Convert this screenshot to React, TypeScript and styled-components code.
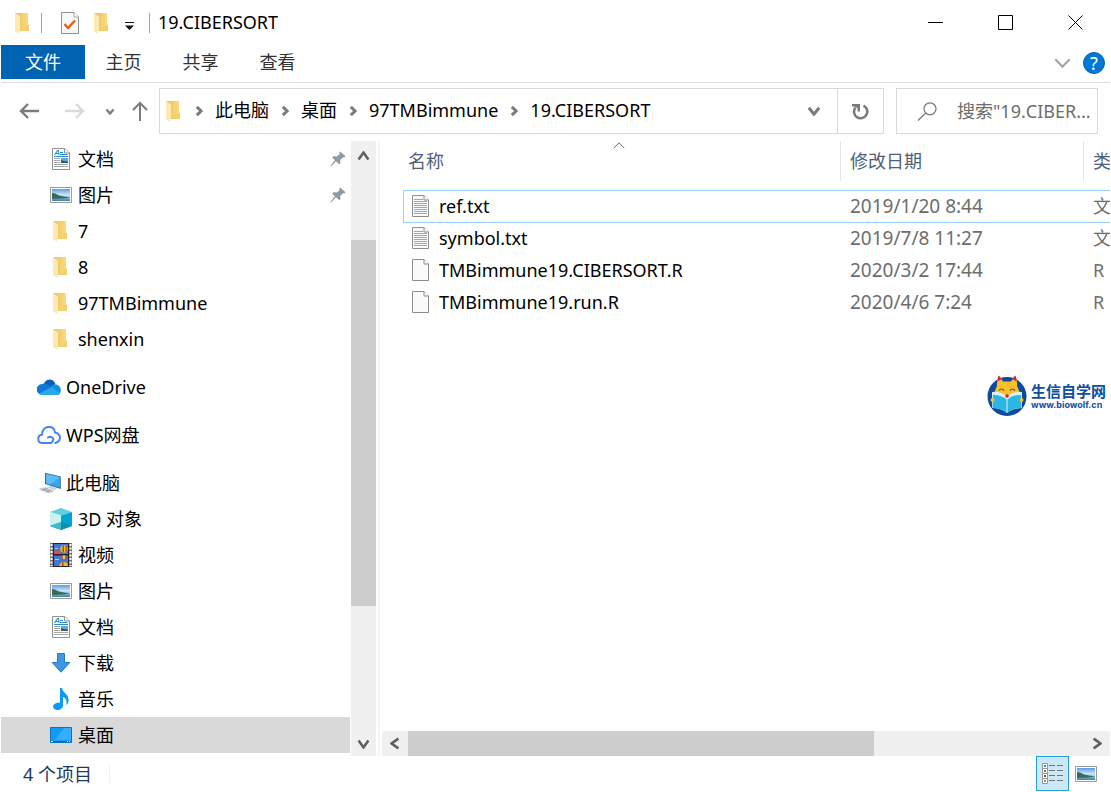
import React from 'react';
import styled, { createGlobalStyle } from 'styled-components';

const GlobalStyle = createGlobalStyle`
  * { box-sizing: border-box; }
  body {
    margin: 0;
    background: #fff;
    color: #000;
    font: 18px/24px "Noto Sans", "Noto Sans CJK SC", sans-serif;
  }
  button, input { font: inherit; color: inherit; }
  svg { display: block; flex: none; }
`;

const Window = styled.div`
  display: flex;
  flex-direction: column;
  min-height: 100vh;
  padding: 0 1px;
  overflow: hidden;
`;

const PlainButton = styled.button`
  display: flex;
  flex: none;
  align-items: center;
  justify-content: center;
  padding: 0;
  border: 0;
  background: none;
`;

/* Title bar */
const TitleBar = styled.header`
  display: flex;
  align-items: center;
  height: 45px;
  padding-left: 14px;
`;
const TitleDivider = styled.span`
  width: 1px;
  height: 20px;
  background: #a3a3a3;
`;
const DocTools = styled.div`
  display: flex;
  align-items: center;
  gap: 19px;
  margin-left: 10px;
`;
const FolderTools = styled.div`
  display: flex;
  align-items: center;
  gap: 15px;
  margin-left: 15px;
`;
const Title = styled.h1`
  flex: 1;
  margin: 0;
  padding: 0 0 2px 8px;
  font-size: 18px;
  font-weight: 400;
`;
const CaptionButton = styled(PlainButton)`
  width: 70px;
  height: 45px;
`;

/* Ribbon */
const Ribbon = styled.nav`
  display: flex;
  align-items: flex-start;
  height: 38px;
  border-bottom: 1px solid #dadbdc;
`;
const RibbonTab = styled(PlainButton)<{ $primary?: boolean }>`
  width: ${(p) => (p.$primary ? 84 : 77)}px;
  height: 34px;
  color: ${(p) => (p.$primary ? '#fff' : '#333')};
  background: ${(p) => (p.$primary ? '#0063b1' : 'none')};
`;
const RibbonEnd = styled.div`
  display: flex;
  align-items: center;
  gap: 12px;
  height: 36px;
  margin-left: auto;
  padding-right: 5px;
`;
const HelpButton = styled(PlainButton)`
  width: 22px;
  height: 22px;
  border: 1px solid #0a5fae;
  border-radius: 50%;
  background: #0078d7;
  color: #fff;
  font-size: 18px;
  line-height: 20px;
`;

/* Address row */
const AddressRow = styled.div`
  display: flex;
  height: 58px;
  padding: 5px 12px 7px 18px;
`;
const History = styled.div`
  display: flex;
  align-items: center;
  width: 140px;
`;
const HistoryButton = styled(PlainButton)<{ $gap: number }>`
  margin-right: ${(p) => p.$gap}px;
`;
const AddressBox = styled.div`
  display: flex;
  flex: 1;
  align-items: center;
  padding-left: 6px;
  border: 1px solid #d9d9d9;
`;
const Crumbs = styled.ol`
  display: flex;
  flex: 1;
  margin: 0;
  padding: 0 0 0 13px;
  list-style: none;
`;
const Crumb = styled.li`
  display: flex;
  align-items: center;
  gap: 12px;
  padding-right: 12px;
  a {
    padding-bottom: 2px;
    color: #000;
    text-decoration: none;
  }
`;
const AddressButton = styled(PlainButton)<{ $divided?: boolean }>`
  width: 46px;
  height: 44px;
  border-left: ${(p) => (p.$divided ? '1px solid #d9d9d9' : '0')};
`;
const SearchBox = styled.label`
  display: flex;
  flex: none;
  align-items: center;
  gap: 20px;
  width: 202px;
  margin-left: 12px;
  padding-left: 20px;
  border: 1px solid #d9d9d9;
`;
const SearchInput = styled.input`
  flex: 1;
  min-width: 0;
  padding: 0;
  border: 0;
  outline: 0;
  background: none;
  &::placeholder { color: #6d6d6d; opacity: 1; }
`;

/* Body */
const Body = styled.div`
  display: flex;
  flex: 1;
`;
const Sidebar = styled.nav`
  flex: none;
  width: 349px;
`;
const SideItem = styled.a<{ $top?: boolean; $selected?: boolean }>`
  display: flex;
  align-items: center;
  gap: 5px;
  height: 36px;
  margin-top: ${(p) => (p.$top ? 12 : 0)}px;
  padding: 0 4px 0 ${(p) => (p.$top ? 36 : 48)}px;
  background: ${(p) => (p.$selected ? '#d9d9d9' : 'none')};
  color: #000;
  text-decoration: none;
`;
const SideIcon = styled.span`
  display: flex;
  flex: none;
  justify-content: center;
  width: 24px;
`;
const SideLabel = styled.span`
  flex: 1;
`;
const VerticalBar = styled.div`
  display: flex;
  flex: none;
  flex-direction: column;
  width: 25px;
  margin-left: 1px;
  background: #f0f0f0;
`;
const BarButton = styled(PlainButton)<{ $size: number; $flow: 'row' | 'column' }>`
  width: ${(p) => (p.$flow === 'row' ? `${p.$size}px` : 'auto')};
  height: ${(p) => (p.$flow === 'column' ? `${p.$size}px` : 'auto')};
`;
const BarPart = styled.div<{ $share: number; $thumb?: boolean }>`
  flex: ${(p) => p.$share};
  background: ${(p) => (p.$thumb ? '#cdcdcd' : 'none')};
`;
const PaneSplit = styled.div`
  flex: none;
  width: 4px;
  margin-left: 2px;
  border-left: 2px solid #f5f5f5;
`;
const FilePane = styled.main`
  display: flex;
  flex: 1;
  flex-direction: column;
  min-width: 0;
`;
const FileScroll = styled.div`
  flex: 1;
  padding-left: 21px;
  overflow: hidden;
`;
const FileTable = styled.table`
  width: 840px;
  border-collapse: collapse;
  table-layout: fixed;
`;
const HeadCell = styled.th<{ $width: number }>`
  width: ${(p) => p.$width}px;
  height: 49px;
  padding: 0;
  vertical-align: top;
  color: #4c607a;
  font-weight: 400;
  text-align: left;
`;
const HeadLabel = styled.div<{ $first?: boolean }>`
  position: relative;
  display: flex;
  align-items: center;
  height: 40px;
  padding-left: ${(p) => (p.$first ? 5 : 9)}px;
  border-left: ${(p) => (p.$first ? 0 : 1)}px solid #e5e5e5;
`;
const SortMark = styled.span`
  position: absolute;
  top: 1px;
  left: 210px;
`;
const FileRow = styled.tr<{ $focused?: boolean }>`
  height: 32px;
  box-shadow: ${(p) => (p.$focused ? 'inset 0 1px #99d1ff, inset 1px 0 #99d1ff, 0 1px #99d1ff' : 'none')};
`;
const NameCell = styled.td`
  padding: 0 0 0 9px;
`;
const FileName = styled.div`
  display: flex;
  align-items: center;
  gap: 10px;
`;
const InfoCell = styled.td<{ $date?: boolean }>`
  padding: 0 0 0 10px;
  color: #6d6d6d;
  font-size: ${(p) => (p.$date ? 19 : 18)}px;
  white-space: nowrap;
`;
const HorizontalBar = styled.div`
  display: flex;
  height: 25px;
  background: #f0f0f0;
`;

/* Brand mark */
const Brand = styled.div`
  display: flex;
  align-items: center;
  justify-content: flex-end;
  gap: 4px;
  margin-top: 57px;
  padding-right: 4px;
  color: #0b4ea2;
`;
const BrandName = styled.div`
  font-size: 15px;
  font-weight: 700;
  line-height: 18px;
`;
const BrandSite = styled.div`
  font: 700 9px/10px Inter, sans-serif;
`;

/* Status bar */
const StatusBar = styled.footer`
  display: flex;
  height: 36px;
  padding: 0 8px 0 22px;
  color: #1e395b;
`;
const StatusText = styled.span`
  height: 18px;
  margin-top: 9px;
  padding-right: 17px;
  border-right: 1px solid #f0f0f0;
  line-height: 18px;
`;
const ViewModes = styled.div`
  display: flex;
  margin-left: auto;
`;
const ViewButton = styled(PlainButton)<{ $active?: boolean }>`
  width: 33px;
  height: 35px;
  border: ${(p) => (p.$active ? '1px solid #26a0da' : '0')};
  background: ${(p) => (p.$active ? '#cbe8f6' : 'none')};
`;

const FolderIcon = () => (
  <svg width="16" height="22" viewBox="1 0 16 22" aria-hidden="true">
    <defs>
      <linearGradient id="folderBack" x1="0" x2="1">
        <stop offset="0" stopColor="#e8c35e" />
        <stop offset="1" stopColor="#fcdc80" />
      </linearGradient>
    </defs>
    <path d="M1 1H14V12L15 13V19H1Z" fill="url(#folderBack)" />
    <path d="M12 13H15V19H10Z" fill="#f4cf6e" />
    <path d="M1 1L6 4.500V18L5 22L1 19Z" fill="#ffe9ae" />
  </svg>
);

type ChevronProps = { dir: 'up' | 'down' | 'left' | 'right'; w: number; h: number; color: string; stroke: number };

const Chevron = ({ dir, w, h, color, stroke }: ChevronProps) => {
  const p = stroke / 2 + 0.3;
  const paths = {
    down: `M${p} ${p}L${w / 2} ${h - p}L${w - p} ${p}`,
    up: `M${p} ${h - p}L${w / 2} ${p}L${w - p} ${h - p}`,
    right: `M${p} ${p}L${w - p} ${h / 2}L${p} ${h - p}`,
    left: `M${w - p} ${p}L${p} ${h / 2}L${w - p} ${h - p}`,
  };
  return (
    <svg width={w} height={h} viewBox={`0 0 ${w} ${h}`} fill="none" stroke={color} strokeWidth={stroke} aria-hidden="true">
      <path d={paths[dir]} />
    </svg>
  );
};

const CheckDocIcon = () => (
  <svg width="18" height="22" viewBox="0 0 18 22" aria-hidden="true">
    <path d="M.5.5H13L17.500 5V21.500H.5Z" fill="#f7f8fa" stroke="#909090" />
    <path d="M13 .5V5H17.500" fill="#fff" stroke="#a8a8a8" />
    <path d="M3.500 12L7 16L14 8.500" fill="none" stroke="#ea5b13" strokeWidth="2.300" />
  </svg>
);

const QuickMenuIcon = () => (
  <svg width="9" height="14" viewBox="0 0 9 14" aria-hidden="true">
    <path d="M0 6H9V7H0ZM0 9.500H9L4.500 14Z" fill="#111" />
  </svg>
);

const DocumentIcon = () => (
  <svg width="18" height="22" viewBox="0 0 18 22" aria-hidden="true">
    <path d="M.5.5H13L17.500 5V21.500H.5Z" fill="#fff" stroke="#8f9294" />
    <path d="M12.500 .5V5H17.500" fill="#f1f1f1" stroke="#8f9294" />
    <path d="M2.500 7L5.500 2.500H6.500L7 7M4 5.500H7" fill="none" stroke="#2a8fd0" strokeWidth="1.100" />
    <path d="M8 4.500H11M8 6.500H15.500M2 8.500H16" stroke="#2a8fd0" />
    <path d="M2 10.500H8M2 12.500H8M2 14.500H8M2 16.500H16M2 18.500H16" stroke="#a6a6a6" />
    <path d="M9 10H16V15H9Z" fill="#69a7df" />
    <path d="M9 12L12 13L16 13.500V15H9Z" fill="#2f5d55" />
  </svg>
);

const PictureIcon = () => (
  <svg width="22" height="16" viewBox="0 0 22 16" aria-hidden="true">
    <defs>
      <linearGradient id="sky" x1="0" x2="0" y1="0" y2="1">
        <stop offset="0" stopColor="#5c9ae6" />
        <stop offset=".5" stopColor="#cce9f8" />
        <stop offset=".75" stopColor="#7fb4cf" />
        <stop offset="1" stopColor="#3d7cb5" />
      </linearGradient>
    </defs>
    <path d="M.5.5H21.500V15.500H.5Z" fill="#fff" stroke="#9b9b9b" />
    <path d="M2 2H20V14H2Z" fill="url(#sky)" />
    <path d="M2 6L5 6.500L9 8.500L14 9.500L20 10.500L13 11.500L2 12Z" fill="#386a55" />
  </svg>
);

const CloudIcon = () => (
  <svg width="24" height="16" viewBox="0 0 24 16" aria-hidden="true">
    <path d="M7 4.500C9-.5 16-1.500 18.500 5L15 9L7 7Z" fill="#0a61b8" />
    <path d="M5.500 16A5.500 5.500 0 0 1 5 5C8 3.500 11 5.500 15 8L4 15.500Z" fill="#0f78d4" />
    <path d="M14 7.500C17 4 23.500 5.500 23.800 11C23.800 14 22 16 20 16L14 10Z" fill="#1490df" />
    <path d="M2 14.500L15 8L22.800 14.300C22 15.500 21 16 19.500 16H5.500C4 16 3 15.500 2 14.500Z" fill="#28a8ea" />
  </svg>
);

const WpsCloudIcon = () => (
  <svg width="24" height="18" viewBox="0 0 24 18" fill="none" stroke="#4285f4" strokeWidth="2" strokeLinecap="round" aria-hidden="true">
    <path d="M14 17H5C0 16.500 0 9.500 5 8.500C5-1 18-1.500 18 6.500C24.500 8 24.500 15 18.500 17" />
    <path d="M11 11.500C13.500 10 17.500 11.500 16 14.500Q15.300 16 14 17" />
  </svg>
);

const ComputerIcon = () => (
  <svg width="24" height="22" viewBox="0 0 24 22" aria-hidden="true">
    <path d="M8 .8L23.800 4.500V17L8 12Z" fill="#3a6f94" />
    <path d="M9 2L22.800 5.300V15.500L9 11.200Z" fill="#35a8f4" />
    <path d="M9 2L22.800 5.300L13 12.500L9 11.200Z" fill="#5bbcf8" />
    <path d="M13 14L20 16.500L17 18L11 15.500Z" fill="#c6ced4" />
    <path d="M1 17L9 15L18 19L11 21.300Z" fill="#d3d9df" />
    <path d="M3.500 16.800L13 20.500M6 16L15.500 20M5 18.500L11 16M9 20L14 17.800" stroke="#8f9ba6" strokeWidth=".7" />
  </svg>
);

const CubeIcon = () => (
  <svg width="22" height="22" viewBox="0 0 22 22" aria-hidden="true">
    <path d="M0 4L11 0L22 4L11 7.500Z" fill="#5fd0dd" />
    <path d="M0 4L11 7.500V22L0 18Z" fill="#c9f2f3" />
    <path d="M22 4L11 7.500V22L22 18Z" fill="#00a5d2" />
    <path d="M0 18L11 14L22 18L11 22Z" fill="#0f8fa8" />
    <path d="M0 18L11 14V22Z" fill="#3cbccb" />
  </svg>
);

const VideoIcon = () => (
  <svg width="22" height="24" viewBox="0 0 22 24" aria-hidden="true">
    <path d="M0 0H22V24H0Z" fill="#6f6f6f" />
    <path d="M3 0H19V24H3Z" fill="#252525" />
    <path d="M1.500 1V23M20.500 1V23" stroke="#fff" strokeWidth="2" strokeDasharray="2 1.500" />
    <path d="M4 1H18V11H4ZM4 12.500H18V23H4Z" fill="#4577d2" />
    <path d="M4 8Q8 6 11 10V11H4Z" fill="#e2503f" />
    <circle cx="14" cy="6" r="3.800" fill="#e9b92d" />
    <path d="M12.500 2.500H14V9.500H12.500Z" fill="#527a2e" />
    <path d="M15.500 3H16.800V9H15.500Z" fill="#c43a26" />
    <path d="M11 12.500H17L14.500 17H13Z" fill="#d34a32" />
    <path d="M13 12.500H15V16H13Z" fill="#f0d249" />
    <path d="M9 23Q10 19 14 19Q18 19 18 23Z" fill="#e9b92d" />
    <path d="M12 19.500H13.500V23H12Z" fill="#c43a26" />
    <path d="M5 5H8V6H5ZM5 16H9V17H5Z" fill="#b5cdf2" />
  </svg>
);

const DownloadIcon = () => (
  <svg width="20" height="20" viewBox="0 0 20 20" aria-hidden="true">
    <path d="M6.500 .5H13.500V9.500H18.800L10 19.200L1.200 9.500H6.500Z" fill="#3d96e6" stroke="#2578c4" />
  </svg>
);

const MusicIcon = () => (
  <svg width="18" height="22" viewBox="0 0 18 22" aria-hidden="true">
    <ellipse cx="6" cy="18.300" rx="5" ry="3.700" transform="rotate(-12 6 18.300)" fill="#0a9bf5" />
    <path d="M8 0H10C10.500 5 17.500 6 16.500 13C16.200 15 15 16.500 14 17C15.500 12 13.500 10 11 9V18H8Z" fill="#0a9bf5" />
  </svg>
);

const DesktopIcon = () => (
  <svg width="22" height="16" viewBox="0 0 22 16" aria-hidden="true">
    <path d="M.5.5H21.500V15.500H.5Z" fill="#109bf7" stroke="#0873bd" />
    <path d="M14 1H21V13H5Z" fill="#35aeff" />
    <path d="M1 14H21V15H1Z" fill="#0a6bb5" />
    <path d="M1 14H3V15H1ZM17 14H18V15H17ZM19 14H20V15H19Z" fill="#fff" />
  </svg>
);

const PinIcon = () => (
  <svg width="16" height="16" viewBox="0 0 16 16" aria-hidden="true">
    <path d="M10.200 .5L15.500 5.200L14.300 6.500L13 6.200L10.200 8.900L10.400 12.200L9.300 13.200L6 10.300L1 15.500L.3 14.900L4.900 9.300L2.200 6.400L3.300 5.300L6.700 5.600L9.600 3.200L9.200 1.700Z" fill="#8e9aa3" />
  </svg>
);

const FileIcon = ({ lined }: { lined?: boolean }) => (
  <svg width="17" height="22" viewBox="0 0 17 22" aria-hidden="true">
    <path d="M.5.5H12L16.500 5V21.500H.5Z" fill="#f9fafb" stroke="#8d8d8d" />
    <path d="M12 .5V5H16.500" fill="#fff" stroke="#8d8d8d" />
    {lined && (
      <path d="M2 4.500H11M2 6.500H15M2 8.500H15M2 10.500H15M2 12.500H15M2 14.500H15M2 16.500H15M2 18.500H15" stroke="#a2a5a6" />
    )}
  </svg>
);

const DetailsIcon = () => (
  <svg width="22" height="22" viewBox="0 0 22 22" aria-hidden="true">
    <path d="M.5.5H5.500V20.500H.5ZM.5 5.500H5.500M.5 10.500H5.500M.5 15.500H5.500" fill="#fff" stroke="#999" />
    <path d="M2 2H4V4H2Z" fill="#3f7cc4" />
    <path d="M2 7H4V9H2Z" fill="#7c8a2c" />
    <path d="M2 12H4V14H2Z" fill="#c8321e" />
    <path d="M2 17H4V19H2Z" fill="#79a584" />
    <path d="M7 2.500H13M15 2.500H21M7 7.500H13M15 7.500H21M7 12.500H13M15 12.500H21M7 17.500H13M15 17.500H21" stroke="#737373" />
  </svg>
);

const WolfLogo = () => (
  <svg width="40" height="42" viewBox="0 0 40 42" aria-hidden="true">
    <circle cx="20" cy="21.500" r="19.500" fill="#0c4b9c" />
    <path d="M11.500 1.500Q14 3 16 6.500H24Q26.500 3 28.500 1.500Q30.500 6 30 11Q33 16 32 21L20 25L8 21Q7 16 10 11Q9.500 6 11.500 1.500Z" fill="#fbbf2c" />
    <path d="M11.500 .5Q13.500 1.500 14.500 4L10.500 6.500Q10.500 3 11.500 .5ZM28.500 .5Q26.500 1.500 25.500 4L29.500 6.500Q29.500 3 28.500 .5Z" fill="#d9232e" />
    <path d="M12 15.500Q14.500 12.500 17 15.500M23 15.500Q25.500 12.500 28 15.500" fill="none" stroke="#6b4a1c" strokeWidth="1.200" />
    <path d="M5 17Q14 16 20 21.500Q26 16 35 17V33Q26 33 20 38Q14 33 5 33Z" fill="#d8f0f8" />
    <path d="M6 20Q14 19.500 19.500 24.500V38Q14 33 5.500 33ZM34 20Q26 19.500 20.500 24.500V38Q26 33 34.500 33Z" fill="#2cb6e4" />
    <circle cx="20" cy="21" r="1.800" fill="#d9232e" />
    <circle cx="5.500" cy="25" r="2" fill="#fbbf2c" />
    <circle cx="34.500" cy="25" r="2" fill="#fbbf2c" />
  </svg>
);

const sideItems = [
  { label: '文档', icon: <DocumentIcon />, pinned: true },
  { label: '图片', icon: <PictureIcon />, pinned: true },
  { label: '7', icon: <FolderIcon /> },
  { label: '8', icon: <FolderIcon /> },
  { label: '97TMBimmune', icon: <FolderIcon /> },
  { label: 'shenxin', icon: <FolderIcon /> },
  { label: 'OneDrive', icon: <CloudIcon />, top: true },
  { label: 'WPS网盘', icon: <WpsCloudIcon />, top: true },
  { label: '此电脑', icon: <ComputerIcon />, top: true },
  { label: '3D 对象', icon: <CubeIcon /> },
  { label: '视频', icon: <VideoIcon /> },
  { label: '图片', icon: <PictureIcon /> },
  { label: '文档', icon: <DocumentIcon /> },
  { label: '下载', icon: <DownloadIcon /> },
  { label: '音乐', icon: <MusicIcon /> },
  { label: '桌面', icon: <DesktopIcon />, selected: true },
];

const files = [
  { name: 'ref.txt', date: '2019/1/20 8:44', type: '文', lined: true, focused: true },
  { name: 'symbol.txt', date: '2019/7/8 11:27', type: '文', lined: true },
  { name: 'TMBimmune19.CIBERSORT.R', date: '2020/3/2 17:44', type: 'R' },
  { name: 'TMBimmune19.run.R', date: '2020/4/6 7:24', type: 'R' },
];

const crumbs = ['此电脑', '桌面', '97TMBimmune', '19.CIBERSORT'];

export default function App() {
  return (
    <Window>
      <GlobalStyle />
      <TitleBar>
        <FolderIcon />
        <DocTools>
          <TitleDivider />
          <PlainButton aria-label="属性"><CheckDocIcon /></PlainButton>
        </DocTools>
        <FolderTools>
          <PlainButton aria-label="新建文件夹"><FolderIcon /></PlainButton>
          <PlainButton aria-label="自定义快速访问工具栏"><QuickMenuIcon /></PlainButton>
          <TitleDivider />
        </FolderTools>
        <Title>19.CIBERSORT</Title>
        <CaptionButton aria-label="最小化">
          <svg width="15" height="15" aria-hidden="true"><path d="M0 7.500H15" stroke="#000" /></svg>
        </CaptionButton>
        <CaptionButton aria-label="最大化">
          <svg width="15" height="15" aria-hidden="true"><path d="M.5.5H14.500V14.500H.5Z" fill="none" stroke="#000" /></svg>
        </CaptionButton>
        <CaptionButton aria-label="关闭">
          <svg width="15" height="15" aria-hidden="true"><path d="M.5.5L14.500 14.500M14.500 .5L.5 14.500" stroke="#000" /></svg>
        </CaptionButton>
      </TitleBar>

      <Ribbon>
        <RibbonTab $primary>文件</RibbonTab>
        <RibbonTab>主页</RibbonTab>
        <RibbonTab>共享</RibbonTab>
        <RibbonTab>查看</RibbonTab>
        <RibbonEnd>
          <PlainButton aria-label="展开功能区"><Chevron dir="down" w={17} h={10} color="#a0a0a0" stroke={2} /></PlainButton>
          <HelpButton>?</HelpButton>
        </RibbonEnd>
      </Ribbon>

      <AddressRow>
        <History>
          <HistoryButton $gap={26} aria-label="后退">
            <svg width="20" height="16" fill="none" stroke="#7b7b7b" strokeWidth="2.400" aria-hidden="true"><path d="M20 8H2M9 1L2 8L9 15" /></svg>
          </HistoryButton>
          <HistoryButton $gap={20} aria-label="前进">
            <svg width="20" height="16" fill="none" stroke="#d9d9d9" strokeWidth="2.400" aria-hidden="true"><path d="M0 8H18M11 1L18 8L11 15" /></svg>
          </HistoryButton>
          <HistoryButton $gap={17} aria-label="最近位置"><Chevron dir="down" w={10} h={7} color="#7b7b7b" stroke={2.4} /></HistoryButton>
          <HistoryButton $gap={0} aria-label="上移">
            <svg width="16" height="20" fill="none" stroke="#7b7b7b" strokeWidth="2" aria-hidden="true"><path d="M8 20V2M1 9L8 2L15 9" /></svg>
          </HistoryButton>
        </History>
        <AddressBox>
          <FolderIcon />
          <Crumbs>
            {crumbs.map((c) => (
              <Crumb key={c}>
                <Chevron dir="right" w={8} h={12} color="#7b7b7b" stroke={3} />
                <a href="#">{c}</a>
              </Crumb>
            ))}
          </Crumbs>
          <AddressButton aria-label="历史记录"><Chevron dir="down" w={14} h={10} color="#7b7b7b" stroke={3} /></AddressButton>
          <AddressButton $divided aria-label="刷新">
            <svg width="17" height="17" viewBox="0 0 17 17" aria-hidden="true">
              <path d="M11.500 2.700A6.600 6.600 0 1 1 3.500 4.500" fill="none" stroke="#7b7b7b" strokeWidth="2.600" />
              <path d="M0 1H8V8.500H5.500V5L2 3.500H0Z" fill="#7b7b7b" />
            </svg>
          </AddressButton>
        </AddressBox>
        <SearchBox>
          <svg width="20" height="19" fill="none" stroke="#7b7b7b" strokeWidth="1.300" aria-hidden="true">
            <circle cx="13" cy="6.800" r="6" />
            <path d="M8.700 11L1 18.500" />
          </svg>
          <SearchInput type="text" placeholder={'搜索"19.CIBER...'} aria-label="搜索" />
        </SearchBox>
      </AddressRow>

      <Body>
        <Sidebar>
          {sideItems.map((item, i) => (
            <SideItem key={i} href="#" $top={item.top} $selected={item.selected}>
              <SideIcon>{item.icon}</SideIcon>
              <SideLabel>{item.label}</SideLabel>
              {item.pinned && <PinIcon />}
            </SideItem>
          ))}
        </Sidebar>
        <VerticalBar>
          <BarButton $flow="column" $size={30} aria-label="向上滚动"><Chevron dir="up" w={13} h={10} color="#606060" stroke={2.6} /></BarButton>
          <BarPart $share={69} />
          <BarPart $share={366} $thumb />
          <BarPart $share={125} />
          <BarButton $flow="column" $size={25} aria-label="向下滚动"><Chevron dir="down" w={13} h={10} color="#606060" stroke={2.6} /></BarButton>
        </VerticalBar>
        <PaneSplit />
        <FilePane>
          <FileScroll>
            <FileTable>
              <thead>
                <tr>
                  <HeadCell $width={437}>
                    <HeadLabel $first>
                      名称
                      <SortMark><Chevron dir="up" w={12} h={7} color="#6d6d6d" stroke={1} /></SortMark>
                    </HeadLabel>
                  </HeadCell>
                  <HeadCell $width={243}><HeadLabel>修改日期</HeadLabel></HeadCell>
                  <HeadCell $width={160}><HeadLabel>类</HeadLabel></HeadCell>
                </tr>
              </thead>
              <tbody>
                {files.map((f) => (
                  <FileRow key={f.name} $focused={f.focused}>
                    <NameCell><FileName><FileIcon lined={f.lined} />{f.name}</FileName></NameCell>
                    <InfoCell $date>{f.date}</InfoCell>
                    <InfoCell>{f.type}</InfoCell>
                  </FileRow>
                ))}
              </tbody>
            </FileTable>
            <Brand>
              <WolfLogo />
              <div>
                <BrandName>生信自学网</BrandName>
                <BrandSite>www.biowolf.cn</BrandSite>
              </div>
            </Brand>
          </FileScroll>
          <HorizontalBar>
            <BarButton $flow="row" $size={26} aria-label="向左滚动"><Chevron dir="left" w={10} h={13} color="#606060" stroke={2.6} /></BarButton>
            <BarPart $share={466} $thumb />
            <BarPart $share={210} />
            <BarButton $flow="row" $size={26} aria-label="向右滚动"><Chevron dir="right" w={10} h={13} color="#606060" stroke={2.6} /></BarButton>
          </HorizontalBar>
        </FilePane>
      </Body>

      <StatusBar>
        <StatusText>4 个项目</StatusText>
        <ViewModes>
          <ViewButton $active aria-label="详细信息"><DetailsIcon /></ViewButton>
          <ViewButton aria-label="大图标"><PictureIcon /></ViewButton>
        </ViewModes>
      </StatusBar>
    </Window>
  );
}
